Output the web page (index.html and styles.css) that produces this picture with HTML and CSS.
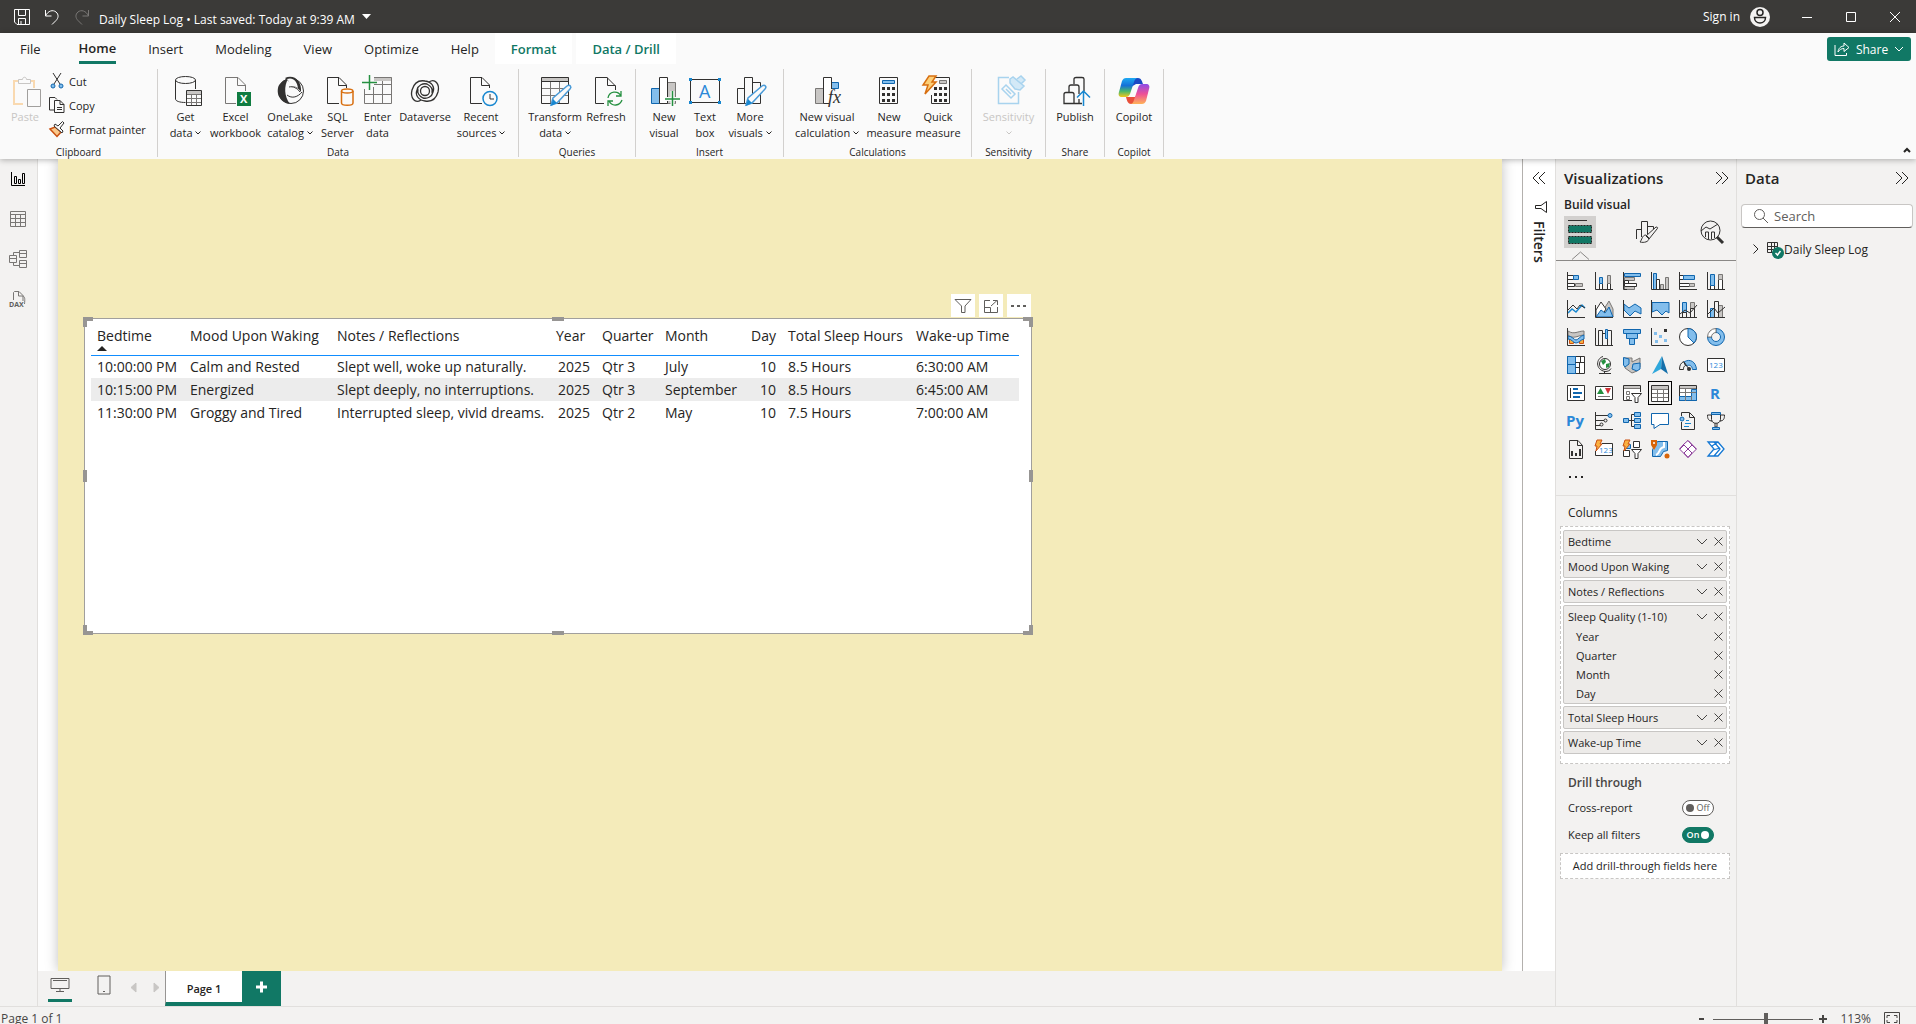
FILE: index.html
```html
<!DOCTYPE html>
<html lang="en">
<head>
    <meta charset="UTF-8">
    <meta name="viewport" content="width=device-width, initial-scale=1.0">
    <title>Daily Sleep Log - Power BI Desktop</title>
    <link rel="stylesheet" href="styles.css">
</head>
<body>
    <header class="titlebar">
        <div class="quick-actions">
            <button aria-label="Save"><svg width="16" height="16"><path d="M.5 .5h15v15H3l-2.500-2.500zM4.500 1v5.500h7V1M4.500 15v-5.500h7V15M7 15v-3"/></svg></button>
            <button aria-label="Undo"><svg width="16" height="16"><path d="M1.500 1v6h6M1.500 7C4 1.500 9 .5 12 3s2.500 6 0 8.500L8 15.500"/></svg></button>
            <button aria-label="Redo" class="dim"><svg width="16" height="16"><path d="M14.500 1v6h-6M14.500 7C12 1.500 7 .5 4 3s-2.500 6 0 8.500L8 15.500"/></svg></button>
        </div>
        <button class="doc-title">Daily Sleep Log • Last saved: Today at 9:39 AM <svg width="10" height="6"><path class="solid" d="M0 0h9L4.500 5z"/></svg></button>
        <button class="sign-in">Sign in
            <svg width="20" height="20"><circle class="solid" cx="10" cy="10" r="10"/><g class="face"><circle cx="10" cy="5.500" r="3"/><path d="M4.500 10.500h11c0 3.500-2.500 5.500-5.500 5.500s-5.500-2-5.500-5.500z"/></g></svg>
        </button>
        <div class="window-buttons">
            <button aria-label="Minimize"><svg width="12" height="12"><path d="M1 6.500h10"/></svg></button>
            <button aria-label="Maximize"><svg width="12" height="12"><path d="M1.500 1.500h9v9h-9z"/></svg></button>
            <button aria-label="Close"><svg width="12" height="12"><path d="M1 1l10 10M11 1L1 11"/></svg></button>
        </div>
    </header>

    <section class="ribbon">
        <nav class="tabs">
            <a href="#" class="tab file">File</a>
            <a href="#" class="tab active"><span>Home</span></a>
            <a href="#" class="tab">Insert</a>
            <a href="#" class="tab">Modeling</a>
            <a href="#" class="tab">View</a>
            <a href="#" class="tab">Optimize</a>
            <a href="#" class="tab">Help</a>
            <a href="#" class="tab context">Format</a>
            <a href="#" class="tab context">Data / Drill</a>
            <button class="share"><svg width="16" height="16"><path d="M1 4v10.500h11.500V12M4 11c.5-4 3-6 6-6V2l5 4.500-5 4v-3C7.500 7.500 5.500 8.500 4 11z"/></svg>Share<svg width="10" height="6"><path d="M1 1l4 4 4-4"/></svg></button>
        </nav>

        <div class="groups">
            <div class="group clipboard">
                <div class="items">
                    <button class="item off">
                        <svg width="32" height="32"><path stroke="#f9d9b0" stroke-width="2" d="M14 29H5V6h4M19 6h6v7"/><path stroke="#c8c6c4" fill="#fafafa" d="M9.500 8.500v-4h4c0-3 4-3 4 0h4v4z"/><path stroke="#a19f9d" fill="#fafafa" d="M18.500 14.500h13v17h-13z"/></svg>
                        <span>Paste</span>
                    </button>
                    <div class="small-items">
                        <button><svg width="16" height="16"><path class="k" d="M4 0l7 11M12 0L5 11"/><circle class="b" cx="4" cy="13" r="2"/><circle class="b" cx="12" cy="13" r="2"/></svg>Cut</button>
                        <button><svg width="16" height="16"><path class="k" d="M5 13H.5V.5H6l2 2M5.500 3.500H11l4 4v8H5.500zM11 3.500v4h4M8 10.500h5M8 12.500h5"/></svg>Copy</button>
                        <button><svg width="16" height="16"><path fill="#fbc88a" stroke="#ca5010" stroke-width="1.500" d="M1 8l5-2 6 5-4 4.500z"/><path class="k" fill="#fafafa" d="M5 5l8 7 1-2-3-3 4-5-1.500-1.500L9 5 6 3z"/></svg>Format painter</button>
                    </div>
                </div>
                <h2>Clipboard</h2>
            </div>
            <div class="group data">
                <div class="items">
                    <button class="item">
                        <svg width="32" height="32"><path class="k" d="M5.500 5v19c0 2 4 3.500 10 3.500M25.500 5v9"/><ellipse class="k" cx="15.500" cy="5" rx="10" ry="3.500"/><path class="k" fill="#fafafa" d="M16.500 15.500h15v15h-15z"/><path fill="#c8c6c4" d="M17 16h14v3H17z"/><path class="k thin" d="M17 19.500h14M17 23.500h14M17 27.500h14M21.500 19v11M26.500 19v11"/></svg>
                        <span>Get<br>data <svg width="6" height="4"><path d="M.5 .5L3 3 5.500 .5"/></svg></span>
                    </button>
                    <button class="item">
                        <svg width="32" height="32"><path class="k thin" d="M17 28.500H6.500v-26H19L26.500 10v6M18.500 2.500v8h8"/><path fill="#107c41" d="M18 17h14v14H18z"/><text x="21" y="28" class="xl">X</text></svg>
                        <span>Excel<br>workbook</span>
                    </button>
                    <button class="item">
                        <svg width="32" height="32"><circle class="k" cx="17" cy="16" r="12.500"/><path fill="#323130" d="M11 3C20-1 28 6 27 17c-2-3-5-6-11-6 1-4-2-5-5-8zM5 10c3-4 6-6 9-6-4 7-4 17 2 25C7 28 1 19 5 10z"/><path fill="#fafafa" d="M13 4c6-2 10 2 11 9-3-2-6-2-9-1 1-3 0-6-2-8z"/><path class="k" d="M13 20c5 4 11 2 15-3M15 12c4-1 8 1 11 5"/></svg>
                        <span>OneLake<br>catalog <svg width="6" height="4"><path d="M.5 .5L3 3 5.500 .5"/></svg></span>
                    </button>
                    <button class="item">
                        <svg width="32" height="32"><path class="k" d="M17 28.500H5.500v-26H17L24.500 10v3M16.500 2.500v8h8"/><path fill="#fafafa" stroke="#d86f10" stroke-width="1.500" d="M19.500 16v12c0 3 11.500 3 11.500 0V16"/><ellipse fill="#fafafa" stroke="#d86f10" stroke-width="1.500" cx="25.200" cy="16" rx="5.700" ry="2"/></svg>
                        <span>SQL<br>Server</span>
                    </button>
                    <button class="item">
                        <svg width="32" height="32"><path fill="#c8c6c4" d="M12 2h18v4H12z"/><path class="k thin" d="M12 2.500h17.500v26h-27V14M2 19.500h27M12 9.500h17M11.500 12v16M20.500 6v22"/><path stroke="#259040" stroke-width="1.500" d="M0 7.500h15M7.500 0v15"/></svg>
                        <span>Enter<br>data</span>
                    </button>
                    <button class="item">
                        <svg width="32" height="32"><g class="k" stroke-width="1.300"><circle cx="16" cy="16" r="4.500"/><path d="M12 25C6 29 1 23 3 15 5 8 10 5 16 6c7 1 10 6 8 11-1 5-6 7-10 6-4-2-6-5-5-9M20 7c6-4 11 2 9 10-2 7-7 10-13 9-7-1-10-6-8-11 1-5 6-7 10-6 4 2 6 5 5 9"/></g></svg>
                        <span>Dataverse</span>
                    </button>
                    <button class="item">
                        <svg width="32" height="32"><path class="k" d="M17 28.500H5.500v-26H17L24.500 10v3M16.500 2.500v8h8"/><circle fill="#fafafa" stroke="#1787d0" stroke-width="1.500" cx="25" cy="23.500" r="7"/><path class="k" d="M25 19v5h4"/></svg>
                        <span>Recent<br>sources <svg width="6" height="4"><path d="M.5 .5L3 3 5.500 .5"/></svg></span>
                    </button>
                </div>
                <h2>Data</h2>
            </div>
            <div class="group queries">
                <div class="items">
                    <button class="item">
                        <svg width="32" height="32"><path fill="#c8c6c4" d="M3 2h27v4H3z"/><path class="k thin" d="M2.500 13.500h27M2.500 20.500h27M11.500 6v22M20.500 6v22"/><path class="k" d="M2.500 2.500h27v26h-27zM2 6.500h28"/><path class="pen" d="M12 30l2-7 14-12c3-2 5 1 3 3L18 28z"/><path fill="#1787d0" d="M12 31l2-7 4 4z"/></svg>
                        <span>Transform<br>data <svg width="6" height="4"><path d="M.5 .5L3 3 5.500 .5"/></svg></span>
                    </button>
                    <button class="item">
                        <svg width="32" height="32"><path class="k" d="M14 28.500H5.500v-26H17L25.500 11v4M17.500 2.500v8h8"/><path stroke="#259040" stroke-width="1.300" d="M18 23c1-7 10-8 13-2M31 16v5h-5M32 25c-2 6-10 7-13 1M18 31v-5h5"/></svg>
                        <span>Refresh</span>
                    </button>
                </div>
                <h2>Queries</h2>
            </div>
            <div class="group insert">
                <div class="items">
                    <button class="item">
                        <svg width="32" height="32"><path class="b" d="M3.500 13.500h8v15h-8z"/><path class="g" d="M19.500 7.500h8v21h-8z"/><path class="k" fill="#fff" d="M11.500 2.500h8v26h-8z"/><path stroke="#fafafa" stroke-width="4" d="M17 24h16M24.500 16v16"/><path stroke="#259040" stroke-width="1.500" d="M17 24h15M24.500 16v15"/></svg>
                        <span>New<br>visual</span>
                    </button>
                    <button class="item">
                        <svg width="32" height="32"><path class="k" d="M1.500 4.500h29v23h-29z"/><path fill="#1787d0" d="M0 3h3v3H0zM29 3h3v3h-3zM0 26h3v3H0zM29 26h3v3h-3z"/><text x="10" y="23" class="letter-a">A</text></svg>
                        <span>Text<br>box</span>
                    </button>
                    <button class="item">
                        <svg width="32" height="32"><path class="k" d="M3.500 13.500h7v15h-7zM10.500 2.500h8v26h-8zM18.500 7.500h8v21h-8z"/><path class="pen" d="M12 30l2-7 14-12c3-2 5 1 3 3L18 28z"/><path fill="#1787d0" d="M12 31l2-7 4 4z"/></svg>
                        <span>More<br>visuals <svg width="6" height="4"><path d="M.5 .5L3 3 5.500 .5"/></svg></span>
                    </button>
                </div>
                <h2>Insert</h2>
            </div>
            <div class="group calculations">
                <div class="items">
                    <button class="item">
                        <svg width="32" height="32"><path class="g" d="M4.500 13.500h8v15h-8z"/><path class="b" d="M20.500 7.500h7v6h-7z"/><path class="k" fill="#fff" d="M12.500 2.500h8v26h-8z"/><path fill="#fafafa" d="M18 14h14v18H18z"/><text x="17" y="28" class="fx">fx</text></svg>
                        <span>New visual<br>calculation <svg width="6" height="4"><path d="M.5 .5L3 3 5.500 .5"/></svg></span>
                    </button>
                    <button class="item">
                        <svg width="32" height="32"><path class="k" d="M6.500 2.500h18v26h-18z"/><path class="b" d="M9.500 5.500h12v3h-12z"/><path class="dots" d="M9 13.500h14M9 19.500h14M9 25.500h14"/></svg>
                        <span>New<br>measure</span>
                    </button>
                    <button class="item">
                        <svg width="32" height="32"><path class="k" d="M10 2.500h17.500v26h-18V20"/><path class="g" d="M17.500 5.500h7v3h-7z"/><path class="dots" d="M12 13.500h14M12 19.500h14M12 25.500h14"/><path fill="#fccf78" stroke="#d86f10" stroke-width="1.500" d="M7 1h7l-4 6h4L3 19l3-9H1z"/></svg>
                        <span>Quick<br>measure</span>
                    </button>
                </div>
                <h2>Calculations</h2>
            </div>
            <div class="group narrow">
                <div class="items">
                    <button class="item off">
                        <svg width="32" height="32"><g stroke="#a8d3ee" stroke-width="1.500"><path d="M16 2.500H5.500v26h20V17"/><path d="M9 14l4-4 9 9-4 4zM13 14l5 5"/><path fill="#d3e9f7" stroke="#a8d3ee" d="M17 4l3-2 11 9-4 4-5-1-5-6zM24 4l4-3 4 4-4 4"/></g></svg>
                        <span>Sensitivity<br><svg width="6" height="4"><path d="M.5 .5L3 3 5.500 .5"/></svg></span>
                    </button>
                </div>
                <h2>Sensitivity</h2>
            </div>
            <div class="group slim">
                <div class="items">
                    <button class="item">
                        <svg width="32" height="32"><g class="k" stroke-width="1.300"><path d="M7 17.500h6c2 0 2 1 2 2v9H5v-9c0-1 0-2 2-2zM10 17v-5c0-1 0-2 2-2h6c2 0 2 1 2 2v7M15 28.500h8M20 28v-4M15 9V4c0-1 1-1.500 2-1.500h6c1 0 2 .5 2 1.500v12"/></g><path stroke="#1787d0" stroke-width="1.500" d="M24.500 31V16M18 22.500l6.500-6.500 6.500 6.500"/></svg>
                        <span>Publish</span>
                    </button>
                </div>
                <h2>Share</h2>
            </div>
            <div class="group slim">
                <div class="items">
                    <button class="item">
                        <svg width="32" height="32" viewBox="0 0 32 32">
                            <defs>
                                <linearGradient id="copilotA" x1="0" y1="0" x2="0" y2="1"><stop offset="0" stop-color="#1ea9f2"/><stop offset=".4" stop-color="#1470d8"/><stop offset=".7" stop-color="#4ab86a"/><stop offset="1" stop-color="#f5c81a"/></linearGradient>
                                <linearGradient id="copilotB" x1="0" y1="0" x2="0" y2="1"><stop offset="0" stop-color="#8c4be8"/><stop offset=".5" stop-color="#ee5097"/><stop offset="1" stop-color="#ffb357"/></linearGradient>
                            </defs>
                            <path fill="#1b49c4" d="M15 3h5c3 0 4 3 5 6h-7l-5 3z"/>
                            <path fill="#e8503a" d="M8 22h9l3-3-3 10h-4c-3 0-4-3-5-7z"/>
                            <path fill="url(#copilotA)" d="M8 3h12c-2 0-3 1-4 4l-4 12c-1 2-2 3-4 3H4c-3 0-4-2-3-5L4 6c1-2 2-3 4-3z"/>
                            <path fill="url(#copilotB)" d="M24 29H12c2 0 3-1 4-4l4-12c1-3 2-4 4-4h4c3 0 4 2 3 5l-3 12c-1 2-2 3-4 3z"/>
                        </svg>
                        <span>Copilot</span>
                    </button>
                </div>
                <h2>Copilot</h2>
            </div>
            <button class="collapse" aria-label="Collapse ribbon"><svg width="10" height="6"><path d="M2 5l3-3 3 3"/></svg></button>
        </div>
    </section>

    <main class="workspace">
        <nav class="views">
            <a href="#" class="current" aria-label="Report view"><svg width="16" height="16"><path d="M1.500 1v13.500H15M4.500 5.500h2v7h-2zM8.500 8.500h2v4h-2zM12.500 2.500h2v10h-2z"/></svg></a>
            <a href="#" aria-label="Table view"><svg width="16" height="16"><path d="M.5 .5h15v15H.5zM0 3.500h16M0 7.500h16M0 11.500h16M5.500 3v13M10.500 3v13"/></svg></a>
            <a href="#" aria-label="Model view"><svg width="18" height="18"><path d="M.5 5.500h7v7h-7zM0 8.500h8M10.500 .5h7v7h-7zM10 3.500h8M10.500 10.500h7v7h-7zM10 13.500h8M4.500 5V2.500h6M4.500 13v2.500h6"/></svg></a>
            <a href="#" aria-label="DAX query view"><svg width="18" height="18"><path d="M4.500 10V2.500l1-1H10l4 4V11M9.500 2v4H14M14 6c2 1 2 3 1.500 8"/><text x="0" y="17" class="dax">DAX</text></svg></a>
        </nav>

        <section class="report">
            <div class="canvas">
                <div class="page">
                    <article class="visual">
                        <div class="visual-tools">
                            <button aria-label="Filters"><svg width="16" height="16"><path d="M0 1.500h16L10 8v6.500H6.500V8z"/></svg></button>
                            <button aria-label="Focus mode"><svg width="16" height="16"><path d="M7 2.500H1.500v12h13V9M1 9.500h6.500V15M8 8l6-5.500M10 2.500h4.500V7"/></svg></button>
                            <button aria-label="More options"><svg width="16" height="16"><path class="solid" d="M0 7h3v2H0zM6 7h3v2H6zM12 7h3v2h-3z"/></svg></button>
                        </div>
                        <table>
                            <colgroup><col class="c1"><col class="c2"><col class="c3"><col class="c4"><col class="c5"><col class="c6"><col class="c7"><col class="c8"><col class="c9"></colgroup>
                            <thead>
                                <tr><th class="sorted">Bedtime</th><th>Mood Upon Waking</th><th>Notes / Reflections</th><th>Year</th><th>Quarter</th><th>Month</th><th class="num">Day</th><th>Total Sleep Hours</th><th>Wake-up Time</th></tr>
                            </thead>
                            <tbody>
                                <tr><td>10:00:00 PM</td><td>Calm and Rested</td><td>Slept well, woke up naturally.</td><td class="num">2025</td><td>Qtr 3</td><td>July</td><td class="num">10</td><td>8.5 Hours</td><td>6:30:00 AM</td></tr>
                                <tr><td>10:15:00 PM</td><td>Energized</td><td>Slept deeply, no interruptions.</td><td class="num">2025</td><td>Qtr 3</td><td>September</td><td class="num">10</td><td>8.5 Hours</td><td>6:45:00 AM</td></tr>
                                <tr><td>11:30:00 PM</td><td>Groggy and Tired</td><td>Interrupted sleep, vivid dreams.</td><td class="num">2025</td><td>Qtr 2</td><td>May</td><td class="num">10</td><td>7.5 Hours</td><td>7:00:00 AM</td></tr>
                            </tbody>
                        </table>
                        <i class="handle top left"></i><i class="handle top right"></i><i class="handle bottom left"></i><i class="handle bottom right"></i>
                        <i class="handle mid-top"></i><i class="handle mid-bottom"></i><i class="handle mid-left"></i><i class="handle mid-right"></i>
                    </article>
                </div>
            </div>
            <aside class="filters">
                <button aria-label="Expand filters"><svg width="14" height="12"><path d="M7 0L1 6l6 6M13 0L7 6l6 6"/></svg></button>
                <svg width="12" height="12"><path d="M11.500 .5v11L6 7.500H.5v-3H6z"/></svg>
                <h2>Filters</h2>
            </aside>
            <footer class="pages">
                <button class="layout on" aria-label="Desktop layout"><svg width="20" height="16"><path d="M1 1.500h18v10H1zM3 3.500h14M10 12v3M6 14.500h8"/></svg></button>
                <button class="layout" aria-label="Mobile layout"><svg width="14" height="20"><path d="M1 1h12v18H1zM6 16.500h2"/></svg></button>
                <button class="arrow" aria-label="Previous page"><svg width="6" height="10"><path d="M5 0v9L0 4.500z"/></svg></button>
                <button class="arrow" aria-label="Next page"><svg width="6" height="10"><path d="M0 0v9l5-4.500z"/></svg></button>
                <button class="page-tab">Page 1</button>
                <button class="add-page" aria-label="New page"><svg width="12" height="12"><path d="M0 6h11M5.500 .5v11"/></svg></button>
            </footer>
        </section>

        <aside class="pane viz">
            <header>
                <h2>Visualizations</h2>
                <button aria-label="Collapse"><svg width="14" height="12"><path d="M1 0l6 6-6 6M7 0l6 6-6 6"/></svg></button>
            </header>
            <h3>Build visual</h3>
            <div class="modes">
                <button class="on" aria-label="Build visual"><svg width="24" height="26"><path class="k" d="M0 1.500h19"/><path fill="#117865" stroke="#252423" stroke-dasharray="2 1" d="M.5 6.500h23v7H.5zM.5 17.500h23v7H.5z"/></svg></button>
                <button aria-label="Format visual"><svg width="24" height="26"><path class="k" d="M2.500 20V10.500h5V18M7.500 11V2.500h6V15M13.500 7.500h6v3"/><path class="k" fill="#f3f2f1" d="M12 17L22 8c2 0 2 1 1 2l-8 10zM12 16c-4 0-4 5-6 7 4 1 9 0 9-4z"/></svg></button>
                <button aria-label="Analytics"><svg width="24" height="26"><circle class="k" cx="10.500" cy="11.500" r="9.500"/><path class="k" d="M1 12l5-4 4 2 8-5M5.500 18v-5h3v7M11.500 20v-7h3v6"/><path stroke="#323130" stroke-width="3" d="M17 18l6 6"/></svg></button>
            </div>
            <svg class="notch" width="18" height="8"><path d="M0 7.500L8.500 0 17 7.500"/></svg>

            <div class="gallery">
                <button aria-label="Stacked bar chart"><svg width="18" height="18"><path class="k" fill="#fff" d="M.5 3.500h6v4h-6zM.5 11.500h7v3h-7z"/><path class="b" d="M6.500 3.500h5v4h-5z"/><path class="g" d="M8.500 11.500h7v3h-7z"/><path class="k" d="M.5 0v17.500H18"/></svg></button>
                <button aria-label="Stacked column chart"><svg width="18" height="18"><path class="k" fill="#fff" d="M4.500 11.500h3v6h-3zM12.500 11.500h3v6h-3z"/><path class="b" d="M4.500 5.500h3v6h-3z"/><path class="g" d="M12.500 3.500h3v8h-3z"/><path class="k" d="M.5 0v17.500H18"/></svg></button>
                <button aria-label="Clustered bar chart"><svg width="18" height="18"><path class="b" d="M1.500 1.500h16v3h-16z"/><path class="g" d="M1.500 5.500h10v3h-10zM1.500 14.500h10v3h-10z"/><path class="k" fill="#fff" d="M1.500 8.500h4v3h-4zM1.500 11.500h12v3h-12z"/><path class="k" d="M.5 0v17.500H4"/></svg></button>
                <button aria-label="Clustered column chart"><svg width="18" height="18"><path class="b" d="M2.500 1.500h3v16h-3z"/><path class="g" d="M9.500 12.500h3v5h-3zM14.500 5.500h3v12h-3z"/><path class="k" fill="#fff" d="M5.500 7.500h3v10h-3z"/><path class="k" d="M.5 0v17.500H18"/></svg></button>
                <button aria-label="100% stacked bar chart"><svg width="18" height="18"><path class="k" fill="#fff" d="M.5 3.500h4v4h-4zM.5 11.500h10v3H.5z"/><path class="b" d="M4.500 3.500h11v4h-11z"/><path class="g" d="M10.500 11.500h5v3h-5z"/><path class="k" d="M.5 0v17.500H18"/></svg></button>
                <button aria-label="100% stacked column chart"><svg width="18" height="18"><path class="k" fill="#fff" d="M3.500 13.500h4v4h-4zM11.500 7.500h4v10h-4z"/><path class="b" d="M3.500 2.500h4v11h-4z"/><path class="g" d="M11.500 2.500h4v5h-4z"/><path class="k" d="M.5 0v17.500H18"/></svg></button>

                <button aria-label="Line chart"><svg width="18" height="18"><path stroke="#1787d0" stroke-width="1.500" d="M1 13l4-4 4 3 6-7 3 3"/><path class="k" d="M1 10l5-5 4 4 3-4 5 3M.5 0v17.500H18"/></svg></button>
                <button aria-label="Area chart"><svg width="18" height="18"><path class="g" d="M9 9l5-8 4 8v8H9z"/><path class="k" fill="#fff" d="M1 10l5-8 5 7-5 8H1z"/><path class="b" d="M1 17l5-7 4 3 4-6 4 10H1z"/><path class="k" d="M.5 5v12.500H18"/></svg></button>
                <button aria-label="Stacked area chart"><svg width="18" height="18"><path class="b" d="M1 4l5 4 6-4 6 4v6l-6-3-5 5-6-6z"/><path class="k" d="M.5 0v17.500H18"/></svg></button>
                <button aria-label="100% stacked area chart"><svg width="18" height="18"><path class="b" d="M1 2.500h17V13l-3-2-4 4-5-5-5 2z"/><path class="k" d="M.5 0v17.500H18"/></svg></button>
                <button aria-label="Line and stacked column chart"><svg width="18" height="18"><path class="b" d="M3.500 2.500h4v10h-4z"/><path class="g" d="M11.500 2.500h4v6h-4z"/><path class="k" d="M3.500 12.500h4v5h-4zM11.500 8.500h4v9h-4zM.5 0v17.500H18M1 14l5-4 5 3 7-8"/></svg></button>
                <button aria-label="Line and clustered column chart"><svg width="18" height="18"><path class="b" d="M3.500 8.500h4v9h-4z"/><path class="g" d="M11.500 5.500h4v12h-4z"/><path class="k" d="M7.500 1.500h4v16h-4zM.5 0v17.500H18M1 14l6-6 4 5 7-6"/></svg></button>

                <button aria-label="Ribbon chart"><svg width="18" height="18"><path class="g" d="M1 3c6 4 10 0 16 0v4c-5 0-11 5-16 0z"/><path fill="#fbb040" stroke="#ca5010" d="M2.500 11.500h4v4h-4zM12.500 10.500h4v5h-4z"/><path class="b" d="M1 8c4 0 6 4 8 4s4-4 8-5v4c-4 1-5 4-8 4s-4-4-8-4z"/><path class="k" d="M.5 0v17.500H18"/></svg></button>
                <button aria-label="Waterfall chart"><svg width="18" height="18"><path class="k" d="M3.500 17.500v-15h4v15M12.500 17.500v-15h4v15M.5 0v17.500H18M7 5.500h3"/><path class="b" d="M10.500 1.500h2v9h-2z"/></svg></button>
                <button aria-label="Funnel chart"><svg width="18" height="18"><path class="b" d="M.5 1.500h17v4H.5zM3.500 5.500h11v5h-11zM6.500 10.500h5v6h-5z"/></svg></button>
                <button aria-label="Scatter chart"><svg width="18" height="18"><path fill="#83beec" d="M3 4h3v3H3zM8 7h3v3H8zM13 11h3v3h-3zM4 12h3v3H4z"/><path fill="#323130" d="M13 1h3v3h-3z"/><path class="k" d="M.5 0v17.500H18"/></svg></button>
                <button aria-label="Pie chart"><svg width="18" height="18"><circle class="k" fill="#fff" cx="9" cy="9" r="8.500"/><path class="b" d="M9 .5v8.500l6 6C20 9 17 1 9 .5z"/></svg></button>
                <button aria-label="Donut chart"><svg width="18" height="18"><path class="b" d="M9 .5v4A4.500 4.500 0 1 1 4.500 9h-4A8.500 8.500 0 1 0 9 .5z"/><path fill="#fff" stroke="#797775" d="M9 .5v4A4.500 4.500 0 0 0 4.500 9h-4A8.500 8.500 0 0 1 9 .5z"/></svg></button>

                <button aria-label="Treemap"><svg width="18" height="18"><path class="k" fill="#fff" d="M.5 .5h17v17H.5z"/><path class="b" d="M.5 .5h8v8h-8zM.5 8.500h8v9h-8z"/><path class="k" d="M8.500 6.500h9M13.500 1v5M12.500 6v11M8.500 11.500h4"/></svg></button>
                <button aria-label="Map"><svg width="18" height="18"><circle class="k" fill="#fff" cx="10" cy="8" r="5.500"/><path fill="#259040" d="M6 5l4-2 1 3-3 3zM11 8l4-1-1 4-3 1z"/><path class="k" d="M8 .5c-7 2-8 13 2 15 3 0 5-1 6-3M9.500 15v2.500M4 17.500h12"/></svg></button>
                <button aria-label="Filled map"><svg width="18" height="18"><path class="g" d="M1 2h8v4l8-4v9l-3 4-5 2-7-5z"/><path class="b" d="M.5 1.500L6 3v5l-4 3-1.500-2zM10 8l7-1v6l-3 2-5-2z"/></svg></button>
                <button aria-label="Azure map"><svg width="18" height="18"><path fill="#2fa8dc" d="M11 0L1 18l9-5z"/><path fill="#1570aa" d="M11 0l6 18-7-5z"/></svg></button>
                <button aria-label="Gauge"><svg width="18" height="18"><path class="b" d="M5 6c6-4 12 0 12.500 7.500h-4C13 10 11 8 7 10z"/><path class="k" d="M.5 13.500c0-4 1-6 4-8l2 4c-2 1-2 2-2 4zM5 6l5 7"/><circle fill="#323130" cx="10" cy="13" r="2"/></svg></button>
                <button aria-label="Card"><svg width="18" height="18"><path class="k" fill="#fff" d="M.5 2.500h17v13H.5z"/><text x="2" y="12" class="n123">123</text></svg></button>

                <button aria-label="Multi-row card"><svg width="18" height="18"><path class="k" fill="#fff" d="M.5 1.500h17v15H.5z"/><path stroke="#1066ae" stroke-width="2" d="M6 5h5M6 9h9M6 13h7"/><path class="k" d="M3.500 4v10"/></svg></button>
                <button aria-label="KPI"><svg width="18" height="18"><path class="k" fill="#fff" d="M.5 2.500h17v13H.5z"/><path fill="#259040" d="M2 10h7L5.500 4z"/><path fill="#d13438" d="M10 4h6l-3 6z"/><path class="k thin" d="M3 12.500h12"/></svg></button>
                <button aria-label="Slicer"><svg width="18" height="18"><path class="k" fill="#fff" d="M9 16.500H.5v-15h17V8"/><path fill="#c8c6c4" d="M1 2h16v3H1z"/><path class="k thin" d="M3.500 7.500h3v3h-3zM3.500 12.500h3v3h-3zM1 4.500h16"/><path class="k" fill="#fff" d="M8.500 9.500h10L15 13.500v5h-3v-5z"/></svg></button>
                <button class="picked" aria-label="Table"><svg width="18" height="18"><path class="k" fill="#fff" d="M.5 1.500h17v16H.5z"/><path fill="#c8c6c4" d="M1 2h16v3H1z"/><path class="k thin" d="M1 5.500h16M1 9.500h16M1 13.500h16M6.500 5v12M12.500 5v12"/></svg></button>
                <button aria-label="Matrix"><svg width="18" height="18"><path class="k" fill="#fff" d="M.5 1.500h17v15H.5z"/><path fill="#c8c6c4" d="M1 2h16v3H1z"/><path class="b" d="M12.500 5.500h5v11h-17v-4h12z"/><path class="k thin" d="M1 4.500h16M1 8.500h16M6.500 5v12M12.500 12v4"/></svg></button>
                <button aria-label="R script visual"><svg width="18" height="18"><text x="3" y="15" class="script">R</text></svg></button>

                <button aria-label="Python visual"><svg width="18" height="18"><text x="-1" y="14" class="script">Py</text></svg></button>
                <button aria-label="Key influencers"><svg width="18" height="18"><path class="k" d="M.5 0v17.500H18M1 3.500h12M1 8.500h8M1 13.500h4"/><circle class="b" cx="15" cy="3.500" r="2"/><circle class="k" cx="10.500" cy="8.500" r="1.500"/><circle class="k" cx="6.500" cy="12.500" r="1.500"/></svg></button>
                <button aria-label="Decomposition tree"><svg width="18" height="18"><path class="k" d="M5 8.500h6M11 2.500H8.500v12H11"/><path class="b" d="M.5 6.500h5v4h-5zM11.500 .5h6v4h-6zM11.500 6.500h6v4h-6zM11.500 12.500h6v4h-6z"/></svg></button>
                <button aria-label="Q&amp;A"><svg width="18" height="18"><path fill="#fff" stroke="#1066ae" d="M.5 1.500h17v11H9l-6 4v-4H.5z"/></svg></button>
                <button aria-label="Smart narrative"><svg width="18" height="18"><path class="k" d="M2.500 4V.5h8l5 5v12h-13V10M10.500 1v4.500h5"/><path stroke="#1787d0" d="M7 8.500h3M6 11.500h6M5 14.500h5"/><circle class="b" cx="3" cy="7" r="2"/></svg></button>
                <button aria-label="Metrics"><svg width="18" height="18"><path class="k" d="M4.500 3h-4c0 4 1 6 5 6M13.500 3h4c0 4-1 6-5 6M4.500 1.500h9v6c0 5-9 5-9 0zM8 11v4h2v-4"/><path class="b" d="M4.500 .5h9v2h-9zM5.500 15.500h7v2h-7z"/></svg></button>

                <button aria-label="Paginated report"><svg width="18" height="18"><path class="k" d="M2.500 .5H11l4.500 5v13h-13zM10.500 1v4.500h5"/><path fill="#323130" d="M4 11h2v5H4zM8 13h2v3H8zM12 9h2v7h-2z"/></svg></button>
                <button aria-label="Card (new)"><svg width="18" height="18"><path class="k" fill="#fff" d="M7 3.500h10.500v12H.5V11"/><text x="4" y="13" class="n123">123</text><path class="bolt" d="M2 0h5L5 4h2L1 11l1-5H0z"/></svg></button>
                <button aria-label="Slicer (new)"><svg width="18" height="18"><path class="k" fill="#fff" d="M10.500 1.500h6v6h-6zM.5 10.500h6v6h-6z"/><path class="b" d="M2.500 4.500h5v4h-5z"/><path class="k" fill="#fff" d="M8.500 9.500h10L15 13.500v5h-3v-5z"/><path class="bolt" d="M2 0h5L5 4h2L1 11l1-5H0z"/></svg></button>
                <button aria-label="ArcGIS map"><svg width="18" height="18"><path class="b" d="M1.500 9.500l5-8h10v9l-4 1-3 5h-8z"/><path stroke="#fff" stroke-width="2" d="M5 15c5-2 2-7 8-8V2"/><path fill="#d8650a" d="M0 0h6v5l-3 5-3-5z"/><circle fill="#d8650a" cx="16" cy="16" r="2.500"/><circle fill="#fff" cx="3" cy="3" r="1"/></svg></button>
                <button aria-label="Power Apps"><svg width="18" height="18"><path fill="#fff" stroke="#8a3a99" d="M5 4l4-3.500L17.500 9 9 17.500.5 9zM9 .5L13 5 9 9 5 5M9 9l4 4-4 4.500L5 13zM5 5L1 9M13 5l4 4"/></svg></button>
                <button aria-label="Power Automate"><svg width="18" height="18"><path fill="#fff" stroke="#1478d4" stroke-width="1.300" d="M1 2h10l6 7-6 7H1l6-7zM7 2l6 7-6 7M5 6l6-4M6 10l7-2"/></svg></button>
                <button class="more" aria-label="More visuals"><svg width="18" height="18"><path class="solid" d="M2 8h2v2H2zM8 8h2v2H8zM14 8h2v2h-2z"/></svg></button>
            </div>

            <div class="fields">
                <h4>Columns</h4>
                <ul class="well">
                    <li><span>Bedtime</span><button aria-label="Bedtime options"><svg width="12" height="7"><path d="M1 1l5 5 5-5"/></svg></button><button aria-label="Remove"><svg width="9" height="9"><path d="M.5 .5l8 8M8.500 .5l-8 8"/></svg></button></li>
                    <li><span>Mood Upon Waking</span><button aria-label="Mood Upon Waking options"><svg width="12" height="7"><path d="M1 1l5 5 5-5"/></svg></button><button aria-label="Remove"><svg width="9" height="9"><path d="M.5 .5l8 8M8.500 .5l-8 8"/></svg></button></li>
                    <li><span>Notes / Reflections</span><button aria-label="Notes options"><svg width="12" height="7"><path d="M1 1l5 5 5-5"/></svg></button><button aria-label="Remove"><svg width="9" height="9"><path d="M.5 .5l8 8M8.500 .5l-8 8"/></svg></button></li>
                    <li><span>Sleep Quality (1-10)</span><button aria-label="Sleep Quality options"><svg width="12" height="7"><path d="M1 1l5 5 5-5"/></svg></button><button aria-label="Remove"><svg width="9" height="9"><path d="M.5 .5l8 8M8.500 .5l-8 8"/></svg></button>
                        <ul>
                            <li><span>Year</span><button aria-label="Remove Year"><svg width="9" height="9"><path d="M.5 .5l8 8M8.500 .5l-8 8"/></svg></button></li>
                            <li><span>Quarter</span><button aria-label="Remove Quarter"><svg width="9" height="9"><path d="M.5 .5l8 8M8.500 .5l-8 8"/></svg></button></li>
                            <li><span>Month</span><button aria-label="Remove Month"><svg width="9" height="9"><path d="M.5 .5l8 8M8.500 .5l-8 8"/></svg></button></li>
                            <li><span>Day</span><button aria-label="Remove Day"><svg width="9" height="9"><path d="M.5 .5l8 8M8.500 .5l-8 8"/></svg></button></li>
                        </ul>
                    </li>
                    <li><span>Total Sleep Hours</span><button aria-label="Total Sleep Hours options"><svg width="12" height="7"><path d="M1 1l5 5 5-5"/></svg></button><button aria-label="Remove"><svg width="9" height="9"><path d="M.5 .5l8 8M8.500 .5l-8 8"/></svg></button></li>
                    <li><span>Wake-up Time</span><button aria-label="Wake-up Time options"><svg width="12" height="7"><path d="M1 1l5 5 5-5"/></svg></button><button aria-label="Remove"><svg width="9" height="9"><path d="M.5 .5l8 8M8.500 .5l-8 8"/></svg></button></li>
                </ul>
                <h4 class="drill">Drill through</h4>
                <div class="option"><label for="cross-report">Cross-report</label><label class="toggle"><input type="checkbox" id="cross-report"><span>Off</span></label></div>
                <div class="option"><label for="keep-filters">Keep all filters</label><label class="toggle"><input type="checkbox" id="keep-filters" checked><span>On</span></label></div>
                <div class="drop">Add drill-through fields here</div>
            </div>
        </aside>

        <aside class="pane data-pane">
            <header>
                <h2>Data</h2>
                <button aria-label="Collapse"><svg width="14" height="12"><path d="M1 0l6 6-6 6M7 0l6 6-6 6"/></svg></button>
            </header>
            <label class="search"><svg width="14" height="14"><circle cx="5.500" cy="5.500" r="5"/><path d="M9 9l5 5"/></svg><input type="search" placeholder="Search" aria-label="Search"></label>
            <button class="table-node"><svg width="6" height="10"><path d="M.5 .5L5 5 .5 9.500"/></svg><svg width="20" height="20"><path class="k" d="M2.500 3.500h10v10h-10zM2 7.500h11M2 10.500h11M6.500 3v11M9.500 3v11"/><circle fill="#117865" cx="13" cy="14" r="6"/><path stroke="#fff" stroke-width="1.500" d="M10.500 14l2 2 3-4"/></svg>Daily Sleep Log</button>
        </aside>
    </main>

    <footer class="status">
        <span>Page 1 of 1</span>
        <div class="zoom">
            <button aria-label="Zoom out"><svg width="6" height="12"><path d="M0 6h5"/></svg></button>
            <input type="range" min="10" max="217" value="119" aria-label="Zoom">
            <button aria-label="Zoom in"><svg width="8" height="12"><path d="M0 6h8M4 2v8"/></svg></button>
            <span>113%</span>
            <button aria-label="Fit to page"><svg width="16" height="14"><path d="M.5 .5h15v13H.5zM3 6V3.500h3M10 3.500h3V6M3 8v2.500h3M10 10.500h3V8"/></svg></button>
        </div>
    </footer>
</body>
</html>
```

FILE: styles.css
```css
* {
    box-sizing: border-box;
}
body {
    margin: 0;
    height: 100vh;
    display: flex;
    flex-direction: column;
    overflow: hidden;
    font-family: 'Segoe UI', 'Open Sans', 'Noto Sans', sans-serif;
    font-size: 12px;
    color: #252423;
    background-color: #f3f2f1;
}
button {
    font: inherit;
    color: inherit;
    background: none;
    border: none;
    padding: 0;
    cursor: pointer;
}
h2, h3, h4, ul {
    margin: 0;
    padding: 0;
    list-style: none;
}
a {
    color: inherit;
    text-decoration: none;
}
svg {
    fill: none;
    stroke: currentColor;
    overflow: visible;
    flex: none;
}
/* filled shapes get no outline unless a class adds one */
:where(svg [fill]:not([stroke])) {
    stroke: none;
}

/* shared icon colours */
svg .k { stroke: #323130; }
svg .thin { stroke: #797775; }
svg .b { fill: #83beec; stroke: #1066ae; }
svg .g { fill: #c8c6c4; stroke: #797775; }
svg .solid { fill: currentColor; stroke: none; }
svg .pen { fill: #fafafa; stroke: #4a9bd8; stroke-width: 1.5; }
svg .bolt { fill: #fbb040; stroke: #ca5010; }
svg .dots { stroke: #323130; stroke-width: 3; stroke-dasharray: 3 2; }
svg text { stroke: none; fill: #2b88d8; }

/* title bar */
.titlebar {
    display: flex;
    align-items: center;
    height: 33px;
    background-color: #3b3a38;
    color: #fff;
    flex: none;
}
.quick-actions {
    display: flex;
    gap: 14px;
    padding: 0 9px 0 14px;
}
.quick-actions svg {
    display: block;
}
.dim {
    color: #797775;
}
.doc-title {
    padding-top: 5px;
}
.doc-title svg {
    margin: 0 0 4px 4px;
}
.sign-in {
    display: flex;
    align-items: center;
    gap: 10px;
    margin-left: auto;
}
.sign-in .solid {
    fill: #f3f2f1;
}
.face {
    stroke: #252423;
    stroke-width: 1.5;
}
.window-buttons {
    display: flex;
    gap: 32px;
    padding: 0 15px 0 31px;
}
.window-buttons svg {
    display: block;
}

/* ribbon */
.ribbon {
    flex: none;
    background-color: #fafafa;
    box-shadow: 0 1px 6px rgba(0, 0, 0, 0.3);
    position: relative;
}
.tabs {
    display: flex;
    height: 31px;
    font-size: 13px;
}
.tab {
    display: flex;
    align-items: center;
    padding: 0 16px;
}
.tab.file {
    padding: 0 22px 0 20px;
}
.tab.active {
    font-weight: 600;
}
.tab.active span {
    padding-top: 3px;
    line-height: 25px;
    border-bottom: 3px solid #117865;
}
.tab.context {
    background-color: #fff;
    color: #117865;
    font-weight: 600;
    margin-right: 4px;
}
.share {
    display: flex;
    align-items: center;
    justify-content: center;
    gap: 6px;
    width: 84px;
    height: 24px;
    margin: 4px 5px 0 auto;
    border-radius: 3px;
    background-color: #117865;
    color: #fff;
    font-size: 12px;
}
.groups {
    display: flex;
    height: 95px;
    padding: 5px 0 2px;
}
.group {
    display: flex;
    flex-direction: column;
    justify-content: space-between;
    border-right: 1px solid #d2d0ce;
}
.group h2 {
    font-size: 10px;
    font-weight: 400;
    line-height: 10px;
    text-align: center;
}
.items {
    display: grid;
    padding: 6px 5px 0;
}
.clipboard { width: 158px; }
.data { width: 361px; }
.queries { width: 117px; }
.insert { width: 148px; }
.calculations { width: 188px; }
.narrow { width: 74px; }
.slim { width: 59px; }
.clipboard .items { grid-template-columns: 40px 1fr; }
.data .items { grid-template-columns: 45px 55px 54px 41px 39px 56px 56px; }
.queries .items { grid-template-columns: 62px 40px; }
.insert .items { grid-template-columns: 46px 36px 54px; }
.calculations .items { grid-template-columns: 76px 48px 50px; }
.item {
    display: flex;
    flex-direction: column;
    align-items: center;
    gap: 2px;
    line-height: 16px;
    font-size: 11px;
    white-space: nowrap;
}
.items > .item {
    justify-self: center;
}
.item span svg {
    vertical-align: 2px;
}
.item.off {
    color: #c8c6c4;
}
.small-items {
    display: flex;
    flex-direction: column;
    margin-top: -6px;
    padding-left: 4px;
}
.small-items button {
    display: flex;
    align-items: center;
    gap: 4px;
    height: 24px;
    white-space: nowrap;
    font-size: 11px;
}
.xl {
    font-size: 11px;
    font-weight: 700;
}
svg .xl { fill: #fff; }
.letter-a { font-size: 18px; }
.fx {
    font: italic 18px 'Liberation Serif', serif;
}
svg .fx { fill: #323130; }
.collapse {
    align-self: flex-end;
    margin: 0 4px 4px auto;
}
.collapse svg {
    display: block;
    stroke-width: 2;
}

/* work area */
.workspace {
    display: flex;
    flex: 1;
    min-height: 0;
}
.views {
    width: 38px;
    padding: 12px 2px 0 0;
    border-right: 1px solid #e1dfdd;
    display: flex;
    flex-direction: column;
    gap: 24px;
    align-items: center;
    color: #797775;
}
.views a {
    display: flex;
    align-items: center;
    height: 16px;
}
.views .current {
    color: #000;
}
.dax {
    font-size: 7px;
    font-weight: 700;
}
svg .dax { fill: #605e5c; }
.report {
    flex: 1;
    min-width: 0;
    display: grid;
    grid-template: 1fr 35px / 1fr 33px;
}
.canvas {
    background-color: #fff;
    padding: 0 20px;
    overflow: hidden;
}
.page {
    position: relative;
    height: 100%;
    background-color: #f4ebba;
    box-shadow: 0 0 12px rgba(0, 0, 0, 0.25);
}
.visual {
    position: absolute;
    left: 26px;
    top: 159px;
    width: 948px;
    height: 316px;
    padding: 6px;
    border: 1px solid #a19f9d;
    background-color: #fff;
}
.visual-tools {
    position: absolute;
    right: 0;
    top: -25px;
    display: flex;
    gap: 4px;
}
.visual-tools button {
    display: flex;
    align-items: center;
    justify-content: center;
    width: 24px;
    height: 23px;
    background-color: #fff;
    color: #605e5c;
}
.visual table {
    table-layout: fixed;
    width: 928px;
    border-collapse: collapse;
    font-size: 14px;
    white-space: nowrap;
}
.c1 { width: 93px; }
.c2 { width: 147px; }
.c3 { width: 219px; }
.c4 { width: 46px; }
.c5 { width: 63px; }
.c6 { width: 84px; }
.c7 { width: 39px; }
.c8 { width: 128px; }
.c9 { width: 109px; }
.visual th {
    position: relative;
    height: 30px;
    padding: 0 6px 9px;
    font-weight: 400;
    text-align: left;
    border-bottom: 1px solid #118dff;
}
.visual td {
    height: 23px;
    padding: 0 6px 1px;
}
.visual .num {
    text-align: right;
}
.visual tbody tr:nth-child(even) {
    background-color: #ececec;
}
.sorted::after {
    content: '';
    position: absolute;
    left: 6px;
    bottom: 4px;
    border: 5px solid transparent;
    border-top-width: 0;
    border-bottom-color: #252423;
}
.handle {
    position: absolute;
    width: 10px;
    height: 10px;
    border: 0 solid #979593;
}
.top { top: -2px; border-top-width: 4px; }
.bottom { bottom: -2px; border-bottom-width: 4px; }
.left { left: -2px; border-left-width: 4px; }
.right { right: -2px; border-right-width: 4px; }
.mid-top, .mid-bottom {
    left: calc(50% - 6px);
    width: 12px;
    height: 4px;
    background-color: #979593;
}
.mid-left, .mid-right {
    top: calc(50% - 6px);
    width: 4px;
    height: 12px;
    background-color: #979593;
}
.mid-top { top: -2px; }
.mid-bottom { bottom: -2px; }
.mid-left { left: -2px; }
.mid-right { right: -2px; }

.filters {
    display: flex;
    flex-direction: column;
    align-items: center;
    padding-top: 13px;
    border-left: 1px solid #b3b0ad;
    background-color: #fff;
}
.filters button svg {
    display: block;
}
.filters > svg {
    margin: 17px 0 8px 4px;
}
.filters h2 {
    writing-mode: vertical-rl;
    font-size: 14px;
    font-weight: 600;
    line-height: 20px;
}

/* page tabs */
.pages {
    grid-column: 1 / 3;
    display: flex;
    color: #605e5c;
}
.layout {
    display: flex;
    align-items: center;
    justify-content: center;
    width: 24px;
    margin: 0 0 4px 10px;
    border-bottom: 3px solid transparent;
}
.layout + .layout {
    margin-left: 20px;
}
.layout.on {
    border-color: #117865;
}
.arrow {
    margin-left: 15px;
    color: #c8c6c4;
}
.arrow path {
    fill: currentColor;
}
.arrow + .arrow {
    margin: 0 5px 0 17px;
}
.page-tab {
    width: 77px;
    padding-top: 4px;
    border-left: 1px solid #979593;
    border-bottom: 4px solid #117865;
    background-color: #fff;
    color: #252423;
    font-weight: 600;
    font-size: 11px;
}
.add-page {
    width: 39px;
    background-color: #117865;
    color: #fff;
    stroke-width: 3;
}

/* side panes */
.pane {
    border-left: 1px solid #e1dfdd;
    flex: none;
}
.viz { width: 181px; }
.data-pane { width: 180px; }
.pane header {
    display: flex;
    align-items: center;
    justify-content: space-between;
    padding: 6px 7px 0 8px;
    height: 31px;
}
.pane header svg {
    display: block;
}
.pane h2 {
    font-size: 15px;
    font-weight: 600;
}
.pane h3 {
    padding-left: 8px;
    margin-top: 7px;
    line-height: 16px;
    font-size: 12px;
    font-weight: 600;
}
.modes {
    display: flex;
    justify-content: space-between;
    padding: 3px 8px 0;
}
.modes button {
    display: flex;
    align-items: center;
    justify-content: center;
    width: 32px;
    height: 32px;
}
.modes .on {
    background-color: #d2d0ce;
}
.notch {
    display: block;
    margin: 4px 0 0 16px;
    color: #8a8886;
}
.notch path {
    fill: #f3f2f1;
}
.gallery {
    display: grid;
    grid-template-columns: repeat(6, 28px);
    grid-auto-rows: 28px;
    padding: 6px 6px 4px;
    border-top: 1px solid #8a8886;
    border-bottom: 1px solid #e1dfdd;
}
.gallery button {
    display: flex;
    align-items: center;
    justify-content: center;
    margin: 2px;
}
.gallery .picked {
    border: 1px solid #000;
}
.script {
    font-size: 15px;
    font-weight: 700;
}
.n123 { font-size: 8px; }
.fields {
    padding: 8px 6px 0 4px;
}
.fields h4 {
    padding-left: 8px;
    font-weight: 400;
    line-height: 18px;
}
.fields .drill {
    margin-top: 10px;
    font-weight: 600;
    color: #484644;
}
.well {
    display: flex;
    flex-direction: column;
    gap: 2px;
    margin-top: 4px;
    padding: 3px 2px 9px;
    border: 1px dashed #c8c6c4;
    background-color: #fff;
}
.well > li {
    display: flex;
    flex-wrap: wrap;
    align-items: center;
    padding: 0 3px 0 4px;
    border: 1px solid #c8c6c4;
    border-radius: 2px;
    background-color: #edebe9;
    font-size: 11px;
    line-height: 21px;
}
.well svg {
    display: block;
    margin-left: 6px;
    color: #484644;
}
.well span {
    flex: 1;
}
.well ul {
    width: 100%;
}
.well ul li {
    display: flex;
    align-items: center;
    padding-left: 8px;
    line-height: 19px;
}
.option {
    display: flex;
    align-items: center;
    justify-content: space-between;
    height: 27px;
    padding: 0 16px 0 8px;
    font-size: 11px;
}
.drill + .option {
    margin-top: 2px;
}
.toggle {
    display: flex;
    align-items: center;
    justify-content: center;
    gap: 2px;
    width: 32px;
    height: 16px;
    border: 1px solid #605e5c;
    border-radius: 8px;
    background-color: #fff;
    font-size: 9px;
    color: #605e5c;
}
.toggle input {
    appearance: none;
    width: 8px;
    height: 8px;
    margin: 0;
    border-radius: 50%;
    background-color: #605e5c;
}
.toggle:has(:checked) {
    flex-direction: row-reverse;
    border-color: #117865;
    background-color: #117865;
    color: #fff;
    font-weight: 600;
}
.toggle input:checked {
    background-color: #fff;
}
.drop {
    margin-top: 5px;
    border: 1px dashed #c8c6c4;
    background-color: #fff;
    line-height: 24px;
    font-size: 11px;
    text-align: center;
    white-space: nowrap;
}
.search {
    display: flex;
    align-items: center;
    gap: 6px;
    margin: 14px 3px 0 4px;
    height: 24px;
    padding: 0 12px;
    border: 1px solid #c8c6c4;
    border-bottom-color: #605e5c;
    border-radius: 4px;
    background-color: #fff;
    color: #605e5c;
}
.search input {
    width: 100%;
    min-width: 0;
    border: none;
    outline: none;
    padding: 0;
    background: none;
    font: inherit;
    font-size: 13px;
}
.search input::placeholder {
    color: #605e5c;
}
.table-node {
    display: flex;
    align-items: center;
    margin: 11px 0 0 16px;
}
.table-node svg + svg {
    margin: 0 -1px 0 6px;
}

/* status bar */
.status {
    display: flex;
    justify-content: space-between;
    flex: none;
    height: 18px;
    border-top: 1px solid #e1dfdd;
    overflow: hidden;
    line-height: 24px;
    color: #484644;
}
.status > span {
    padding-left: 1px;
}
.zoom {
    display: flex;
    align-items: center;
    height: 24px;
    padding-right: 16px;
}
.zoom svg {
    display: block;
    stroke-width: 2;
}
.zoom input {
    appearance: none;
    width: 100px;
    height: 1px;
    margin: 0 6px 0 8px;
    background-color: #605e5c;
}
.zoom input::-webkit-slider-thumb {
    appearance: none;
    width: 4px;
    height: 12px;
    background-color: #605e5c;
}
.zoom span {
    margin: 0 13px;
    line-height: 24px;
}
.zoom button:last-child svg {
    stroke-width: 1;
}
```
